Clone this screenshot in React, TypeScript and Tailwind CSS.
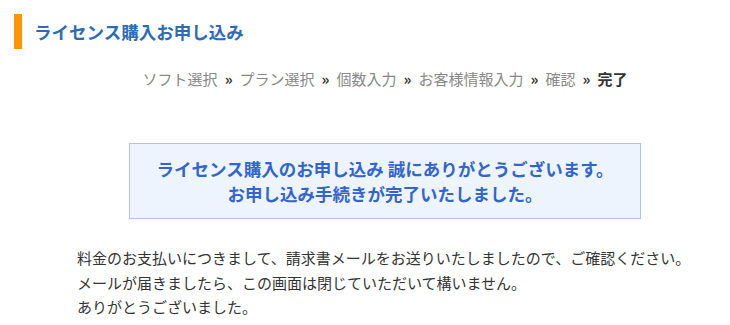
export default function App() {
  const font = { fontFamily: '"Noto Sans CJK JP", "Noto Sans", sans-serif' };
  const steps = ["ソフト選択", "プラン選択", "個数入力", "お客様情報入力", "確認"];
  return (
    <div className="w-[730px] h-[325px] bg-white overflow-hidden" style={font}>
      <div className="pt-[14px] pl-[14px]">
        <div className="flex items-center h-[35px] border-l-[8px] border-[#ff9500] pl-[12px]">
          <h1 className="text-[17.5px] font-bold leading-none text-[#2d6cb5]">ライセンス購入お申し込み</h1>
        </div>
      </div>
      <div className="pl-[40px]">
        <div className="mt-[19px] text-center text-[15px] leading-[22px] text-[#888888]">
          {steps.map((s) => (
            <span key={s}>
              {s}
              <span className="text-[#333333] font-bold mx-[7px]">»</span>
            </span>
          ))}
          <span className="font-bold text-[#333333]">完了</span>
        </div>
        <div className="mx-auto mt-[53px] w-[512px] h-[76px] border border-[#b8c0ee] bg-[#eef4fd] flex flex-col items-center justify-center text-[17.5px] font-bold leading-[25px] text-[#3366cc]">
          <p>ライセンス購入のお申し込み 誠にありがとうございます。</p>
          <p>お申し込み手続きが完了いたしました。</p>
        </div>
        <div className="mt-[27px] pl-[37px] text-[15px] leading-[24.5px] text-[#333333]">
          <p>料金のお支払いにつきまして、請求書メールをお送りいたしましたので、ご確認ください。</p>
          <p>メールが届きましたら、この画面は閉じていただいて構いません。</p>
          <p>ありがとうございました。</p>
        </div>
      </div>
    </div>
  );
}
